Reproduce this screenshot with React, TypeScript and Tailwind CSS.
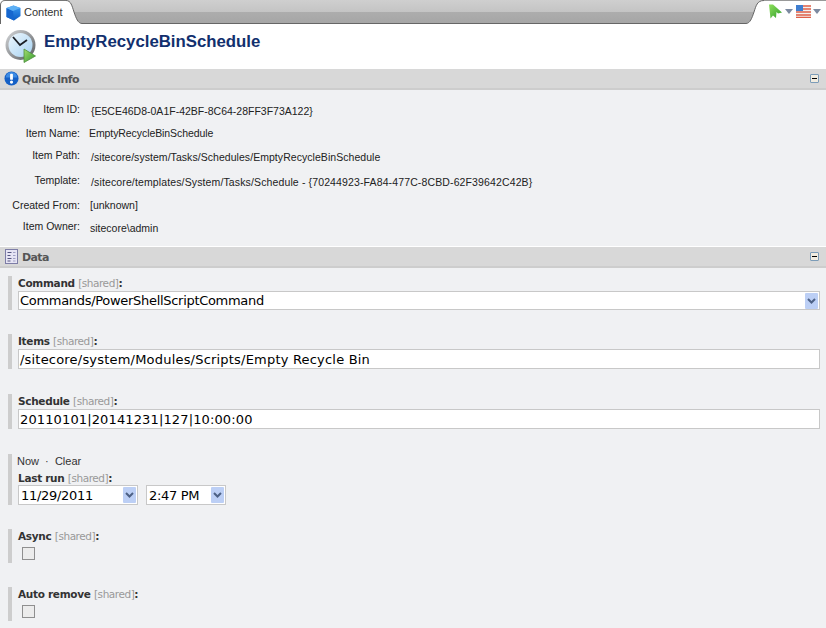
import React from "react";

const UI = "font-['Liberation_Sans',sans-serif]";

function Cube() {
  return (
    <svg width="15" height="16" viewBox="0 0 15 16" className="shrink-0">
      <defs>
        <linearGradient id="cubeR" x1="0" y1="0" x2="0" y2="1">
          <stop offset="0" stopColor="#3c9bf2" />
          <stop offset="1" stopColor="#0d5dc4" />
        </linearGradient>
      </defs>
      <path d="M0.5 3 L7.5 0.5 L14.5 3 L14.5 11 L8 15.5 L0.5 12 Z" fill="url(#cubeR)" />
      <path d="M0.5 3 L7 6 L8 15.5 L0.5 12 Z" fill="#1667cf" />
      <path d="M0.5 3 L7.5 0.5 L14.5 3 L7 6 Z" fill="#5db0f5" />
    </svg>
  );
}

function Clock() {
  return (
    <svg width="32" height="35" viewBox="0 0 32 35">
      <defs>
        <linearGradient id="face" x1="0" y1="0" x2="1" y2="1">
          <stop offset="0" stopColor="#eef7fd" />
          <stop offset="1" stopColor="#a6d2f2" />
        </linearGradient>
        <linearGradient id="rim" x1="0" y1="0" x2="1" y2="1">
          <stop offset="0" stopColor="#d6d8da" />
          <stop offset="1" stopColor="#55585c" />
        </linearGradient>
        <linearGradient id="play" x1="0" y1="0" x2="1" y2="1">
          <stop offset="0" stopColor="#a6dc72" />
          <stop offset="1" stopColor="#2f9a2c" />
        </linearGradient>
      </defs>
      <circle cx="15.5" cy="16" r="15" fill="url(#rim)" />
      <circle cx="15.5" cy="16" r="12" fill="url(#face)" />
      <path d="M8 8 L15 16 L22 11" fill="none" stroke="#1b1f26" strokeWidth="1.8" />
      <path d="M19 20 L30.5 27 L19 33.5 Z" fill="url(#play)" stroke="#4c8f3c" strokeWidth="0.8" />
    </svg>
  );
}

function Info() {
  return (
    <svg width="15" height="15" viewBox="0 0 16 16" className="shrink-0">
      <circle cx="8" cy="8" r="7.5" fill="#1560c6" />
      <path d="M2 7 A6 6 0 0 1 14 7 Z" fill="#3d8be4" />
      <rect x="6.5" y="2.8" width="3" height="6.6" rx="1" fill="#fff" />
      <circle cx="8" cy="11.8" r="1.7" fill="#fff" />
    </svg>
  );
}

function Doc() {
  return (
    <svg width="13" height="15" viewBox="0 0 13 15" className="shrink-0">
      <rect x="0.5" y="0.5" width="12" height="14" fill="#e6e4f4" stroke="#7d7da6" />
      <path d="M2.5 3.5h4M2.5 6.5h3M2.5 9.5h4M2.5 12h3" stroke="#555580" strokeWidth="1.1" />
      <path d="M8 3.5h2.5M8 6.5h2.5M8 9.5h2.5M8 12h2.5" stroke="#a0a0c4" strokeWidth="1.1" />
    </svg>
  );
}

function Collapse() {
  return (
    <span className="w-[9px] h-[9px] border border-[#7c9cb8] bg-[#f1ece0] rounded-[1px] flex items-center justify-center">
      <span className="w-[5px] h-px bg-black" />
    </span>
  );
}

function Bar({ icon, title, h }: { icon: React.ReactNode; title: string; h: string }) {
  return (
    <div className={`${h} shrink-0 bg-[#d8d8d8] border-b-2 border-b-[#cdcdcd] flex items-center pl-[4px] pr-[7px]`}>
      <span className="w-[15px] flex justify-center">{icon}</span>
      <span className="ml-[3px] mt-[3px] flex-1 text-[11px] font-bold text-[#555] font-['DejaVu_Sans',sans-serif] tracking-[-0.6px]">{title}</span>
      <Collapse />
    </div>
  );
}

function InfoRow({ label, value, h, top, pl, track }: { label: string; value: string; h: string; top?: string; pl: string; track?: string }) {
  return (
    <div className={`flex ${h} text-[10.5px] leading-[14px] text-[#222] ${UI}`}>
      <div className="w-[80px] text-right shrink-0">{label}</div>
      <div className={`${pl} ${top ?? ""} ${track ?? ""} whitespace-nowrap`}>{value}</div>
    </div>
  );
}

function Label({ name }: { name: string }) {
  return (
    <div className="h-[15px] text-[10.5px] leading-[14px] whitespace-nowrap font-['DejaVu_Sans',sans-serif]">
      <b className="text-[#333] tracking-[-0.3px]">{name}</b> <span className="text-[#999] tracking-[-0.45px]">[shared]</span>
      <b className="text-[#333]">:</b>
    </div>
  );
}

function Field({ children, mb, h }: { children: React.ReactNode; mb: string; h: string }) {
  return <div className={`${h} ${mb} ml-[8px] border-l-[4px] border-l-[#cdcdcd] pl-[6px]`}>{children}</div>;
}

function Arrow() {
  return (
    <span className="w-[13px] h-[16px] bg-[#bccff5] rounded-[1px] flex items-center justify-center shrink-0">
      <svg width="9" height="6" viewBox="0 0 9 6">
        <path d="M1 1 L4.5 4.5 L8 1" fill="none" stroke="#4d6185" strokeWidth="2" />
      </svg>
    </span>
  );
}

function Box({ value, w, h = "h-[20px]", arrow, pad, track }: { value: string; w: string; h?: string; arrow?: boolean; pad?: string; track: string }) {
  return (
    <div className={`${w} ${h} bg-white border border-[#c8c8c8] flex items-center ${pad ?? "pl-[1px]"} pr-[1px] font-['DejaVu_Sans',sans-serif] text-[13px] text-black`}>
      <span className={`flex-1 whitespace-nowrap leading-none ${track}`}>{value}</span>
      {arrow && <Arrow />}
    </div>
  );
}

function Check() {
  return <div className="ml-[4px] mt-[3px] w-[13px] h-[13px] border border-[#8f8f8f] bg-[#ececec]" />;
}

function Caret({ cls }: { cls: string }) {
  return (
    <svg width="8" height="5" viewBox="0 0 8 5" className={cls}>
      <path d="M0 0H8L4 5Z" fill="#7c8aa0" />
    </svg>
  );
}

export default function App() {
  return (
    <div className="w-[826px] h-[628px] overflow-hidden bg-[#f0f1f3] flex flex-col">
      {/* tab strip */}
      <div className="h-[24px] flex bg-white shrink-0">
        <div className="w-[66px] flex items-center pl-[5px] gap-[3px] border-l border-l-[#666] rounded-tl-[5px] border-t border-t-[#777]">
          <Cube />
          <span className={`text-[11px] text-[#333] ${UI}`}>Content</span>
        </div>
        <svg width="16" height="24" viewBox="0 0 16 24" className="shrink-0">
          <defs>
            <linearGradient id="bandL" x1="0" y1="0" x2="0" y2="1">
              <stop offset="0" stopColor="#cfcfcf" />
              <stop offset="0.5" stopColor="#c4c4c4" />
              <stop offset="0.5" stopColor="#adadad" />
              <stop offset="1" stopColor="#a6a6a6" />
            </linearGradient>
          </defs>
          <path d="M0 0.5 C5 0.5 6 6 8 12 C10 18 12 23.5 16 23.5 L16 0 L0 0 Z" fill="url(#bandL)" />
          <path d="M0 0.5 C5 0.5 6 6 8 12 C10 18 12 23.5 16 23.5" fill="none" stroke="#666" />
        </svg>
        <div className="flex-1 flex flex-col">
          <div className="h-[12px] bg-gradient-to-b from-[#cfcfcf] to-[#c4c4c4]" />
          <div className="flex-1 bg-gradient-to-b from-[#adadad] to-[#a6a6a6] border-b-[1px] border-b-[#666]" />
        </div>
        <svg width="18" height="24" viewBox="0 0 18 24" className="shrink-0">
          <defs>
            <linearGradient id="bandR" x1="0" y1="0" x2="0" y2="1">
              <stop offset="0" stopColor="#cfcfcf" />
              <stop offset="0.5" stopColor="#c4c4c4" />
              <stop offset="0.5" stopColor="#adadad" />
              <stop offset="1" stopColor="#a6a6a6" />
            </linearGradient>
          </defs>
          <path d="M18 0.5 C11 0.5 10 6 8 12 C6 18 4 23.5 0 23.5 L0 0 L18 0 Z" fill="url(#bandR)" />
          <path d="M18 0.5 C11 0.5 10 6 8 12 C6 18 4 23.5 0 23.5" fill="none" stroke="#666" />
        </svg>
        <div className="w-[62px] border-t border-t-[#999] flex items-center pl-[4px] pb-[2px]">
          <svg width="15" height="15" viewBox="0 0 15 15">
            <defs>
              <linearGradient id="pub" x1="0" y1="0" x2="1" y2="1">
                <stop offset="0" stopColor="#8fe05c" />
                <stop offset="1" stopColor="#2f9d2c" />
              </linearGradient>
            </defs>
            <path d="M1 0.5 L5 0.5 L14 8.5 L10 9.5 L8.5 8 L8 14 L5 11.5 L2.5 14.5 Z" fill="url(#pub)" />
          </svg>
          <Caret cls="ml-[2px] mr-[3px]" />
          <svg width="15" height="13" viewBox="0 0 15 13">
            <rect width="15" height="13" fill="#f3f0ee" />
            <path d="M0 1h15M0 4h15M0 7h15M0 10h15M0 12.5h15" stroke="#e0604a" strokeWidth="1.4" />
            <rect width="7" height="6" fill="#3f7ed0" />
          </svg>
          <Caret cls="ml-[2px]" />
        </div>
      </div>

      {/* title */}
      <div className="h-[45px] bg-white flex items-start pl-[5px] pt-[5px] shrink-0">
        <Clock />
        <h1 className="ml-[7px] mt-[2px] font-['Liberation_Sans',sans-serif] font-bold text-[16.8px] leading-[22px] text-[#12306e]">
          EmptyRecycleBinSchedule
        </h1>
      </div>

      <Bar icon={<Info />} title="Quick Info" h="h-[21px]" />
      <div className="h-[156px] pt-[12px] shrink-0">
        <InfoRow label="Item ID:" value="{E5CE46D8-0A1F-42BF-8C64-28FF3F73A122}" h="h-[24px]" top="mt-[2px]" pl="pl-[11px]" />
        <InfoRow label="Item Name:" value="EmptyRecycleBinSchedule" h="h-[22px]" pl="pl-[9px]" track="tracking-[-0.08px]" />
        <InfoRow label="Item Path:" value="/sitecore/system/Tasks/Schedules/EmptyRecycleBinSchedule" h="h-[25px]" top="mt-[2px]" pl="pl-[11px]" track="tracking-[0.05px]" />
        <InfoRow label="Template:" value="/sitecore/templates/System/Tasks/Schedule - {70244923-FA84-477C-8CBD-62F39642C42B}" h="h-[25px]" top="mt-[2px]" pl="pl-[11px]" track="tracking-[0.13px]" />
        <InfoRow label="Created From:" value="[unknown]" h="h-[21px]" pl="pl-[10px]" />
        <InfoRow label="Item Owner:" value="sitecore\admin" h="h-[20px]" top="mt-[2px]" pl="pl-[10px]" />
      </div>
      <div className="h-px bg-white shrink-0" />
      <Bar icon={<Doc />} title="Data" h="h-[21px]" />

      <div className="pt-[8px]">
        <Field h="h-[34px]" mb="mb-[24px]">
          <Label name="Command" />
          <Box value="Commands/PowerShellScriptCommand" w="w-[802px]" h="h-[19px]" arrow track="tracking-[-0.3px]" />
        </Field>
        <Field h="h-[35px]" mb="mb-[25px]">
          <Label name="Items" />
          <Box value="/sitecore/system/Modules/Scripts/Empty Recycle Bin" w="w-[802px]" track="tracking-[0.2px]" />
        </Field>
        <Field h="h-[35px]" mb="mb-[25px]">
          <Label name="Schedule" />
          <Box value="20110101|20141231|127|10:00:00" w="w-[802px]" track="tracking-[0.13px]" />
        </Field>
        <Field h="h-[51px]" mb="mb-[24px]">
          <div className={`h-[17px] text-[11px] leading-[14px] text-[#333] -ml-px ${UI}`}>Now &nbsp;· &nbsp;Clear</div>
          <Label name="Last run" />
          <div className="flex gap-[8px] -mt-px">
            <Box value="11/29/2011" w="w-[120px]" arrow pad="pl-[2px]" track="tracking-[-0.3px]" />
            <Box value="2:47 PM" w="w-[80px]" arrow pad="pl-[2px]" track="tracking-[-0.3px]" />
          </div>
        </Field>
        <Field h="h-[34px]" mb="mb-[24px]">
          <Label name="Async" />
          <Check />
        </Field>
        <Field h="h-[34px]" mb="mb-0">
          <Label name="Auto remove" />
          <Check />
        </Field>
      </div>
    </div>
  );
}
